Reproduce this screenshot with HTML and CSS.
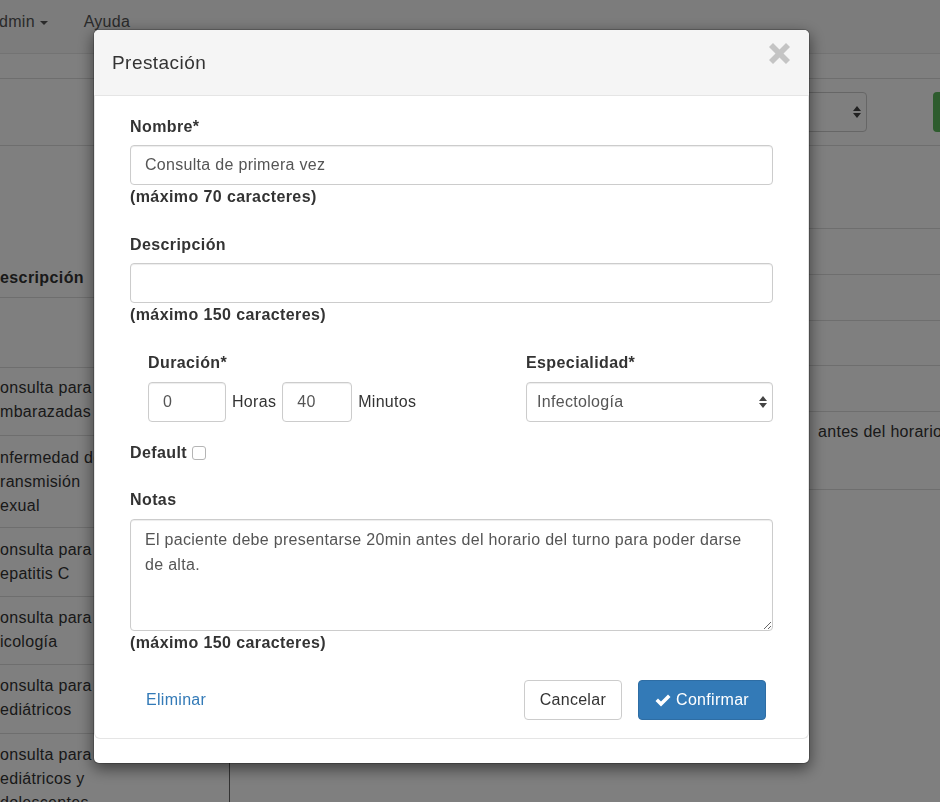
FILE: index.html
```html
<!DOCTYPE html>
<html lang="es">
<head>
<meta charset="utf-8">
<title>Prestación</title>
<link rel="stylesheet" href="styles.css">
</head>
<body>
<div class="page">
  <nav class="navbar">
    <span class="nav-item nav-admin">dmin <span class="caret"></span></span>
    <span class="nav-item nav-help">Ayuda</span>
  </nav>
  <div class="subbar"></div>
  <div class="toolbar">
    <div class="bg-select">
      <svg class="arrows" width="8" height="12" viewBox="0 0 8 12"><path d="M0 5 L4 0 L8 5 Z M0 7 L8 7 L4 12 Z"/></svg>
    </div>
    <div class="bg-btn"></div>
  </div>
  <div class="table">
    <div class="col-left">
      <div class="lcell lhead">escripción</div>
      <div class="lcell l1"></div>
      <div class="lcell l2">onsulta para<br>mbarazadas</div>
      <div class="lcell l3">nfermedad de<br>ransmisión<br>exual</div>
      <div class="lcell l4">onsulta para<br>epatitis C</div>
      <div class="lcell l5">onsulta para<br>icología</div>
      <div class="lcell l6">onsulta para<br>ediátricos</div>
      <div class="lcell l7">onsulta para<br>ediátricos y<br>dolescentes</div>
    </div>
    <div class="col-right">
      <div class="rcell r1"></div>
      <div class="rcell r2"></div>
      <div class="rcell r3"></div>
      <div class="rcell r4"></div>
      <div class="rcell r5"></div>
      <div class="rcell r6">antes del horario</div>
      <div class="rcell r7"></div>
    </div>
  </div>
</div>

<div class="backdrop"></div>

<div class="modal">
  <div class="modal-header">
    <h4 class="modal-title">Prestación</h4>
    <span class="close">
      <svg width="21" height="21" viewBox="0 0 21 21"><path d="M4 0 L10.5 6.5 L17 0 L21 4 L14.5 10.5 L21 17 L17 21 L10.5 14.5 L4 21 L0 17 L6.5 10.5 L0 4 Z"/></svg>
    </span>
  </div>
  <div class="modal-inner">
    <div class="group">
      <label class="lbl">Nombre*</label>
      <input class="fc" type="text" value="Consulta de primera vez">
      <div class="help">(máximo 70 caracteres)</div>
    </div>
    <div class="group spaced">
      <label class="lbl">Descripción</label>
      <input class="fc" type="text" value="">
      <div class="help">(máximo 150 caracteres)</div>
    </div>
    <div class="dur-row">
      <div class="dur">
        <label class="lbl lbl7">Duración*</label>
        <div class="dur-inputs">
          <input class="fc w-h" type="text" value="0">
          <span class="unit">Horas</span>
          <input class="fc w-m" type="text" value="40">
          <span class="unit">Minutos</span>
        </div>
      </div>
      <div class="esp">
        <label class="lbl lbl7">Especialidad*</label>
        <div class="fc sel">
          <span>Infectología</span>
          <svg class="arrows" width="8" height="12" viewBox="0 0 8 12"><path d="M0 5 L4 0 L8 5 Z M0 7 L8 7 L4 12 Z"/></svg>
        </div>
      </div>
    </div>
    <div class="default-row">
      <span class="lbl-inline">Default</span>
      <span class="cb"></span>
    </div>
    <div class="group notes">
      <label class="lbl lbl7">Notas</label>
      <textarea class="fc ta">El paciente debe presentarse 20min antes del horario del turno para poder darse de alta.</textarea>
      <div class="help">(máximo 150 caracteres)</div>
    </div>
    <div class="footer">
      <a class="btn-link">Eliminar</a>
      <div class="btns">
        <span class="btn btn-default">Cancelar</span>
        <span class="btn btn-primary">
          <svg class="check" width="16" height="15" viewBox="0 0 16 15"><path d="M0.5 8 L3 5.5 L6 8.5 L13 1.5 L15.5 4 L6 13.5 Z"/></svg>
          Confirmar
        </span>
      </div>
    </div>
  </div>
</div>
</body>
</html>
```

FILE: styles.css
```css
html, body {
  margin: 0;
  padding: 0;
}
body {
  width: 940px;
  height: 802px;
  overflow: hidden;
  position: relative;
  background: #fff;
  font-family: "Liberation Sans", Arial, sans-serif;
  font-size: 16px;
  letter-spacing: 0.3px;
  color: #333;
}

/* ---------- background page ---------- */
.page {
  width: 940px;
}
.navbar {
  box-sizing: border-box;
  height: 54px;
  padding-top: 10px;
  background: #f8f8f8;
  border-bottom: 1px solid #e7e7e7;
  display: flex;
  line-height: 24px;
  color: #555;
}
.nav-admin {
  margin-left: -1px;
}
.nav-help {
  margin-left: 36px;
}
.caret {
  display: inline-block;
  width: 0;
  height: 0;
  border-top: 4px solid #555;
  border-left: 4px solid transparent;
  border-right: 4px solid transparent;
  vertical-align: middle;
  margin-left: 0;
}
.subbar {
  height: 24px;
  border-bottom: 1px solid #ddd;
}
.toolbar {
  height: 53px;
  padding-top: 13px;
  border-bottom: 1px solid #ddd;
  display: flex;
  align-items: flex-start;
  overflow: hidden;
}
.bg-select {
  flex: none;
  box-sizing: border-box;
  margin-left: 600px;
  width: 267px;
  height: 40px;
  border: 1px solid #ccc;
  border-radius: 4px;
  display: flex;
  align-items: center;
  justify-content: flex-end;
  padding-right: 5px;
}
.arrows path {
  fill: #444;
}
.bg-btn {
  flex: none;
  margin-left: 66px;
  width: 80px;
  height: 40px;
  background: #5cb85c;
  border-radius: 4px;
}
.table {
  display: flex;
  line-height: 24px;
}
.col-left {
  width: 230px;
  flex: none;
}
.col-right {
  flex: 1;
  min-width: 0;
}
.lcell, .rcell {
  box-sizing: border-box;
  border-bottom: 1px solid #ddd;
  white-space: nowrap;
  overflow: hidden;
}
.lcell {
  padding-top: 9px;
}
.lhead {
  height: 152px;
  display: flex;
  align-items: flex-end;
  padding-bottom: 7px;
  font-weight: bold;
  letter-spacing: 0.4px;
}
.l1 { height: 70px; }
.l2 { height: 68px; padding-top: 8px; }
.l3 { height: 92px; padding-top: 10px; }
.l4 { height: 69px; padding-top: 10px; }
.l5 { height: 68px; }
.l6 { height: 69px; }
.l7 {
  height: 120px;
  border-bottom: none;
  border-right: 1px solid #666;
}
.r1 { height: 83px; }
.r2 { height: 46px; }
.r3 { height: 46px; }
.r4 { height: 45px; }
.r5 { height: 46px; }
.r6 {
  height: 78px;
  padding-top: 8px;
  padding-left: 588px;
}
.r7 {
  height: 320px;
  border-bottom: none;
}

/* ---------- modal ---------- */
.backdrop {
  position: fixed;
  inset: 0;
  background: rgba(0, 0, 0, 0.5);
}
.modal {
  position: fixed;
  top: 29px;
  left: 93px;
  width: 717px;
  box-sizing: border-box;
  background: #fff;
  background-clip: padding-box;
  border: 1px solid rgba(0, 0, 0, 0.2);
  border-radius: 6px;
  box-shadow: 0 5px 15px rgba(0, 0, 0, 0.5);
  padding-bottom: 24px;
}
.modal-header {
  display: flex;
  justify-content: space-between;
  align-items: flex-start;
  padding: 21px 19px 20px 18px;
  background: #f5f5f5;
  border-bottom: 1px solid #e5e5e5;
  border-radius: 5px 5px 0 0;
}
.modal-title {
  margin: 0;
  font-size: 19px;
  line-height: 24px;
  font-weight: normal;
  letter-spacing: 0.45px;
  color: #333;
}
.close {
  display: block;
  width: 21px;
  height: 21px;
  margin-top: -8px;
}
.close svg {
  display: block;
}
.close path {
  fill: #c4c4c4;
}
.modal-inner {
  border: 1px solid #e5e5e5;
  border-top: none;
  border-radius: 0 0 6px 6px;
  padding: 19px 35px 18px 35px;
}
.lbl {
  display: block;
  font-weight: bold;
  letter-spacing: 0.4px;
  line-height: 24px;
  margin-bottom: 6px;
}
.lbl7 {
  margin-bottom: 7px;
}
.help {
  font-weight: bold;
  letter-spacing: 0.4px;
  line-height: 24px;
}
.spaced {
  margin-top: 24px;
}
.fc {
  display: block;
  box-sizing: border-box;
  width: 100%;
  height: 40px;
  margin: 0;
  padding: 0 14px;
  border: 1px solid #ccc;
  border-radius: 4px;
  background: #fff;
  font: inherit;
  font-size: 16px;
  letter-spacing: 0.3px;
  color: #555;
  box-shadow: inset 0 1px 1px rgba(0, 0, 0, 0.075);
  outline: none;
}
.dur-row {
  display: flex;
  margin-top: 24px;
}
.dur {
  margin-left: 18px;
}
.dur-inputs {
  display: flex;
  align-items: center;
  gap: 6px;
}
.w-h {
  width: 78px;
}
.w-m {
  width: 70px;
}
.unit {
  line-height: 24px;
}
.esp {
  margin-left: auto;
  width: 247px;
}
.sel {
  display: flex;
  align-items: center;
  justify-content: space-between;
  padding: 0 5px 0 10px;
}
.sel span {
  color: #555;
}
.default-row {
  display: flex;
  align-items: center;
  gap: 5px;
  margin-top: 19px;
  line-height: 24px;
}
.lbl-inline {
  font-weight: bold;
  letter-spacing: 0.4px;
}
.cb {
  box-sizing: border-box;
  width: 14px;
  height: 14px;
  border: 1px solid #b5b5b5;
  border-radius: 3px;
  background: #fff;
}
.notes {
  margin-top: 23px;
}
.ta {
  height: 112px;
  padding: 7px 14px;
  line-height: 25px;
  resize: both;
  font-family: "Liberation Sans", Arial, sans-serif;
}
.footer {
  display: flex;
  align-items: center;
  justify-content: space-between;
  margin-top: 25px;
  padding-right: 7px;
}
.btn-link {
  padding: 0 16px;
  color: #337ab7;
  line-height: 24px;
  text-decoration: none;
}
.btns {
  display: flex;
  gap: 16px;
}
.btn {
  box-sizing: border-box;
  display: inline-flex;
  align-items: center;
  height: 40px;
  padding: 0 16px;
  border: 1px solid #ccc;
  border-radius: 4px;
  font-size: 16px;
}
.btn-default {
  padding: 0 15px;
  background: #fff;
  color: #333;
}
.btn-primary {
  background: #337ab7;
  border-color: #2e6da4;
  color: #fff;
  gap: 5px;
}
.check {
  display: block;
}
.check path {
  fill: #fff;
}
```
